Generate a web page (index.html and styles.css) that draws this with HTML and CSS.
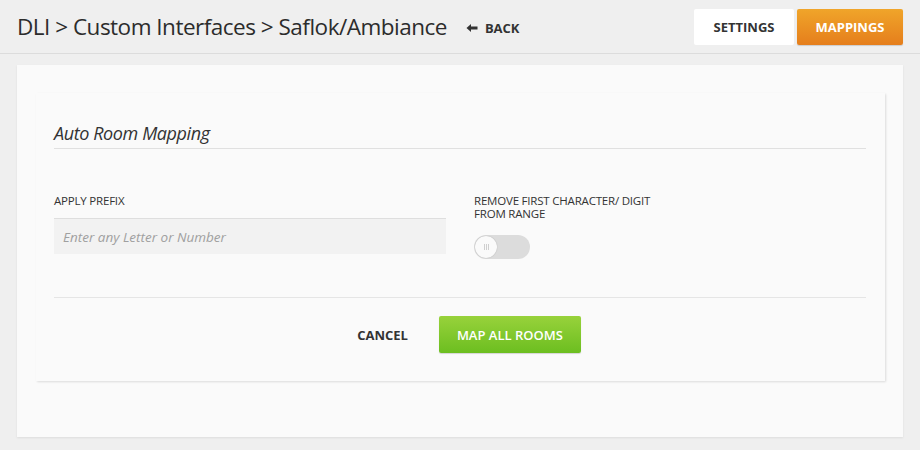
FILE: index.html
```html
<!DOCTYPE html>
<html>
<head>
<meta charset="utf-8">
<link rel="stylesheet" href="styles.css">
</head>
<body>
<div class="page">
  <header class="topbar">
    <div class="crumbs">
      <h1 class="title">DLI &gt; Custom Interfaces &gt; Saflok/Ambiance</h1>
      <a class="back"><svg class="arrow" width="12" height="10" viewBox="0 0 12 10"><path d="M0.5 5 L5 1 L5 3.6 L11.5 3.6 L11.5 6.4 L5 6.4 L5 9 Z" fill="#333"/></svg>BACK</a>
    </div>
    <div class="tabs">
      <button class="tab tab-settings">SETTINGS</button>
      <button class="tab tab-mappings">MAPPINGS</button>
    </div>
  </header>
  <main class="panel">
    <section class="card">
      <h2 class="card-title">Auto Room Mapping</h2>
      <div class="fields">
        <div class="field field-prefix">
          <label class="label">APPLY PREFIX</label>
          <input class="input" type="text" placeholder="Enter any Letter or Number">
        </div>
        <div class="field field-remove">
          <label class="label"><span class="line">REMOVE FIRST CHARACTER/ DIGIT</span><span class="line">FROM RANGE</span></label>
          <div class="toggle"><span class="knob"><i></i><i></i><i></i></span></div>
        </div>
      </div>
      <div class="actions">
        <button class="btn-cancel">CANCEL</button>
        <button class="btn-map">MAP ALL ROOMS</button>
      </div>
    </section>
  </main>
</div>
</body>
</html>
```
FILE: styles.css
```css
* { box-sizing: border-box; }
html, body { margin: 0; padding: 0; }
body {
  background: #efefef;
  font-family: "Open Sans", "Noto Sans", sans-serif;
  color: #333;
  width: 920px;
  height: 450px;
  overflow: hidden;
}
.page { padding: 0 17px 0 17px; }
.topbar {
  display: flex;
  justify-content: space-between;
  align-items: center;
  height: 54px;
  margin: 0 -17px;
  padding: 0 17px;
  border-bottom: 1px solid #dcdcdc;
}
.crumbs { display: flex; align-items: center; gap: 19px; }
.title {
  margin: 0;
  font-weight: 400;
  font-size: 22.5px;
  color: #2c2c2c;
  letter-spacing: -0.5px;
}
.back {
  display: flex;
  align-items: center;
  font-size: 13px;
  font-weight: 700;
  color: #333;
  letter-spacing: -0.1px;
  padding-top: 2px;
}
.arrow { display: block; margin-right: 7px; }
.tabs { display: flex; gap: 3px; align-self: flex-start; margin-top: 9px; }
.tab {
  height: 36px;
  border: 0;
  font-family: inherit;
  font-size: 13px;
  font-weight: 700;
  border-radius: 2px;
  padding: 0;
}
.tab-settings { width: 100px; background: #fff; color: #333; }
.tab-mappings {
  width: 106px;
  background: linear-gradient(#f0a52a, #e57e1c);
  color: #fff;
  box-shadow: 0 1px 1px rgba(0,0,0,0.15);
}
.panel {
  margin-top: 11px;
  background: #fafafa;
  height: 372px;
  padding: 28px 18px 0 19px;
  box-shadow: 0 1px 2px rgba(0,0,0,0.08);
}
.card {
  background: #fafafa;
  height: 288px;
  padding: 0 19px 0 18px;
  box-shadow: 1px 1px 2px rgba(0,0,0,0.12);
}
.card-title {
  margin: 0;
  padding-top: 28px;
  height: 56px;
  font-size: 18px;
  font-weight: 400;
  font-style: italic;
  color: #333;
  letter-spacing: -0.4px;
  border-bottom: 1px solid #e0e0e0;
  line-height: 24px;
}
.fields {
  display: flex;
  gap: 28px;
  padding-top: 45px;
  height: 149px;
  border-bottom: 1px solid #e5e5e5;
}
.field { display: flex; flex-direction: column; }
.field-prefix { width: 392px; }
.label {
  font-size: 11.5px;
  line-height: 13px;
  font-weight: 500;
  color: #333;
  letter-spacing: -0.2px;
}
.line { display: block; height: 13px; }
.input {
  margin-top: 11px;
  height: 36px;
  border: 0;
  border-top: 1px solid #dedede;
  background: #f2f2f2;
  font-family: inherit;
  font-size: 13.5px;
  font-style: italic;
  padding: 0 9px;
  color: #333;
  outline: none;
}
.input::placeholder { color: #a0a0a0; }
.toggle {
  margin-top: 15px;
  width: 56px;
  height: 24px;
  border-radius: 12px;
  background: #dcdcdc;
  position: relative;
}
.knob {
  position: absolute;
  left: 1px;
  top: 1px;
  width: 22px;
  height: 22px;
  border-radius: 50%;
  background: #fafafa;
  box-shadow: 0 0 1px rgba(0,0,0,0.3);
  display: flex;
  align-items: center;
  justify-content: center;
  gap: 1px;
}
.knob i { display: block; width: 1px; height: 6px; background: #cfcfcf; }
.actions {
  display: flex;
  justify-content: center;
  align-items: center;
  gap: 31px;
  padding-top: 18px;
  padding-left: 18px;
}
.btn-cancel {
  background: none;
  border: 0;
  font-family: inherit;
  font-size: 13px;
  font-weight: 700;
  color: #333;
  padding: 0;
}
.btn-map {
  width: 142px;
  height: 37px;
  border: 0;
  border-radius: 2px;
  background: linear-gradient(#98d23b, #6cbe20);
  color: #fff;
  font-family: inherit;
  font-size: 13px;
  font-weight: 600;
  box-shadow: 0 1px 1px rgba(0,0,0,0.15);
}
```
